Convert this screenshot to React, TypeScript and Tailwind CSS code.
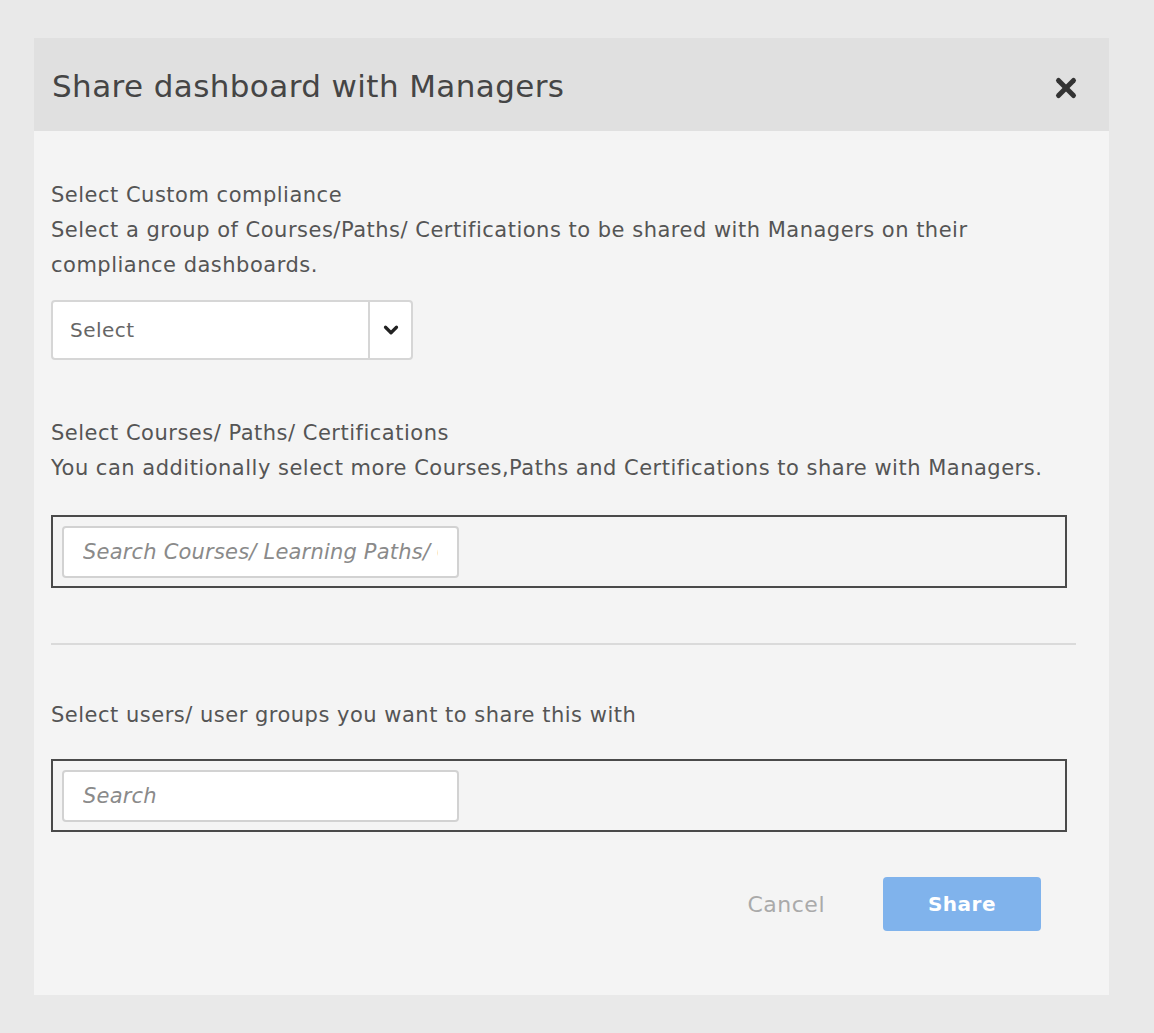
import { ChevronDown, X } from 'lucide-react'

const font = { fontFamily: '"DejaVu Sans", "Open Sans", sans-serif' }

function SearchBox({ placeholder }: { placeholder: string }) {
  return (
    <div className="h-[73px] w-[1016px] border-2 border-[#4a4a4a] p-[9px]">
      <input
        placeholder={placeholder}
        className="h-[52px] w-[397px] rounded-[4px] border-2 border-[#d2d2d2] bg-white px-[19px] text-[21px] italic tracking-[0.2px] outline-none placeholder:text-[#8a8a8a]"
        style={font}
      />
    </div>
  )
}

export default function App() {
  return (
    <div className="min-h-[1033px] bg-[#e9e9e9] pl-[34px] pt-[38px]" style={font}>
      <div className="w-[1075px] bg-[#f4f4f4]">
        <div className="flex h-[93px] items-center justify-between bg-[#e0e0e0] pl-[18px] pr-[28px]">
          <h1 className="pt-[4px] text-[31px] tracking-[0.4px] text-[#454545]">Share dashboard with Managers</h1>
          <X className="mt-[6px] size-[30px] text-[#333]" strokeWidth={4} />
        </div>

        <div className="pl-[17px] pr-[33px] pb-[64px] tracking-[0.5px]">
          <div className="pt-[47px] text-[21px] leading-[35px] text-[#555]">
            <p>Select Custom compliance</p>
            <p>Select a group of Courses/Paths/ Certifications to be shared with Managers on their compliance dashboards.</p>
          </div>

          <div className="mt-[17px] flex h-[60px] w-[362px] rounded-[4px] border-2 border-[#d6d6d6] bg-white">
            <div className="flex flex-1 items-center px-[17px] text-[20px] text-[#666]">Select</div>
            <div className="flex w-[43px] items-center justify-center border-l-2 border-[#d6d6d6]">
              <ChevronDown className="size-[22px] text-[#222]" strokeWidth={3.5} />
            </div>
          </div>

          <div className="mt-[56px] text-[21px] leading-[35px] text-[#555]">
            <p>Select Courses/ Paths/ Certifications</p>
            <p>You can additionally select more Courses,Paths and Certifications to share with Managers.</p>
          </div>

          <div className="mt-[29px]">
            <SearchBox placeholder="Search Courses/ Learning Paths/ Certifications" />
          </div>

          <div className="mt-[55px] h-[2px] w-[1025px] bg-[#dadada]" />

          <p className="mt-[53px] text-[21px] leading-[35px] text-[#555]">Select users/ user groups you want to share this with</p>

          <div className="mt-[26px]">
            <SearchBox placeholder="Search" />
          </div>

          <div className="mt-[45px] flex w-[990px] items-center justify-end gap-[58px]">
            <span className="text-[22px] text-[#aaa]">Cancel</span>
            <button className="h-[54px] w-[158px] rounded-[4px] bg-[#80b3ec] text-[20px] font-bold text-white">Share</button>
          </div>
        </div>
      </div>
    </div>
  )
}
